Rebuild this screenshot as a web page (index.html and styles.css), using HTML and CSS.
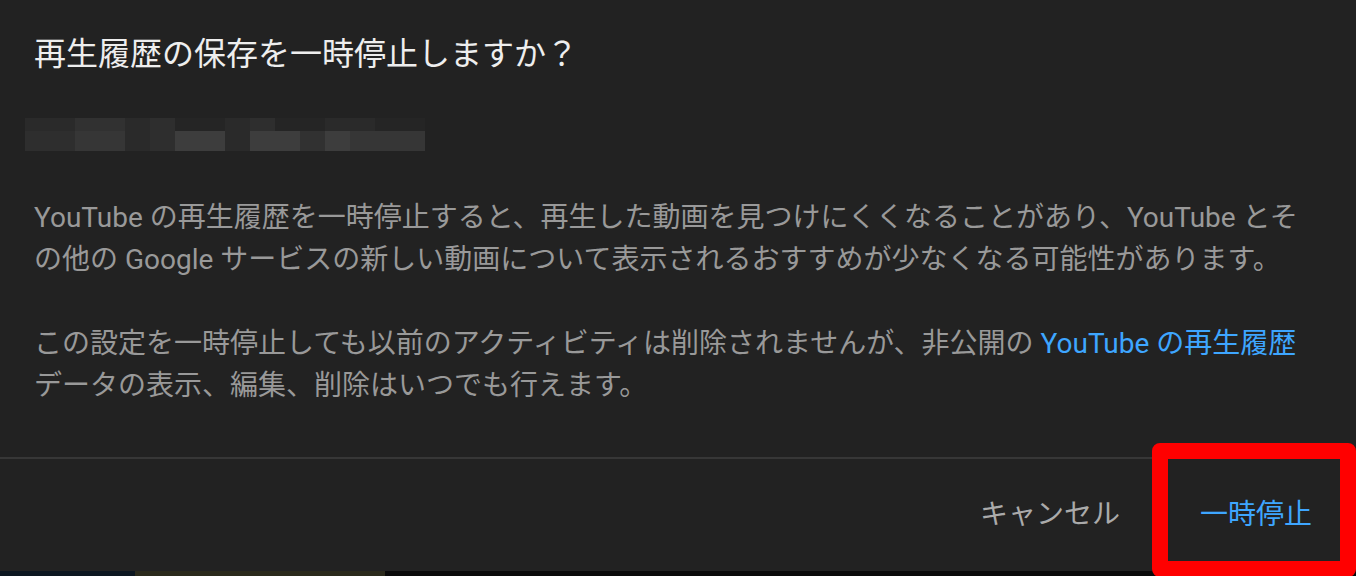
FILE: index.html
```html
<!DOCTYPE html>
<html lang="ja">
  <head>
    <meta charset="UTF-8" />
    <meta name="viewport" content="width=device-width, initial-scale=1.0" />
    <link rel="stylesheet" href="styles.css">
    <title>再生履歴の保存を一時停止</title>
  </head>
  <body>
    <div id="dialog">
      <div class="dialog-body">
        <h2 class="dialog-title">再生履歴の保存を一時停止しますか？</h2>

        <!-- account name, pixelated -->
        <div class="mosaic">
          <div class="px s1"></div><div class="px s1"></div><div class="px s3"></div><div class="px s3"></div>
          <div class="px s1"></div><div class="px s2"></div><div class="px s0"></div><div class="px s0"></div>
          <div class="px s1"></div><div class="px s2"></div><div class="px s0"></div><div class="px s0"></div>
          <div class="px s1"></div><div class="px s1"></div><div class="px s0"></div><div class="px s0"></div>
          <div class="px s2"></div><div class="px s2"></div><div class="px s4"></div><div class="px s4"></div>
          <div class="px s1"></div><div class="px s2"></div><div class="px s5"></div><div class="px s5"></div>
          <div class="px s1"></div><div class="px s5"></div><div class="px s5"></div><div class="px s3"></div>
          <div class="px s5"></div><div class="px s4"></div><div class="px s4"></div><div class="px s4"></div>
        </div>

        <p class="dialog-text">YouTube の再生履歴を一時停止すると、再生した動画を見つけにくくなることがあり、YouTube とその他の Google サービスの新しい動画について表示されるおすすめが少なくなる可能性があります。</p>
        <p class="dialog-text">この設定を一時停止しても以前のアクティビティは削除されませんが、非公開の <a href="#" class="link">YouTube の再生履歴</a>データの表示、編集、削除はいつでも行えます。</p>
      </div>

      <div class="dialog-footer">
        <button class="btn btn-cancel">キャンセル</button>
        <button class="btn btn-confirm">一時停止</button>
      </div>

      <!-- annotation box -->
      <div class="highlight"></div>
    </div>

    <div id="page-strip">
      <div class="strip-a"></div>
      <div class="strip-b"></div>
      <div class="strip-c"></div>
    </div>
  </body>
</html>
```

FILE: styles.css
```css
body {
  margin: 0;
  background-color: #ffffff;
  font-family: Roboto, "Noto Sans CJK JP", sans-serif;
}

#dialog {
  position: relative;
  width: 1356px;
  height: 571px;
  background-color: #222222;
  display: flex;
  flex-direction: column;
}

.dialog-body {
  flex: 1;
  padding: 34px 0 0 34px;
  width: 1280px;
}

.dialog-title {
  margin: 0;
  font-size: 32px;
  line-height: 40px;
  font-weight: normal;
  color: #eeeeee;
}

.mosaic {
  margin: 44px 0 0 -9px;
  display: grid;
  grid-template-columns: repeat(16, 25px);
  grid-template-rows: 13px 20px;
}

.s0 { background-color: #252525; }
.s1 { background-color: #2a2a2a; }
.s2 { background-color: #2e2e2e; }
.s3 { background-color: #313131; }
.s4 { background-color: #363636; }
.s5 { background-color: #3d3d3d; }

.dialog-text {
  margin: 46px 0 0 0;
  font-size: 28px;
  line-height: 42px;
  color: #999999;
}

.dialog-text + .dialog-text {
  margin-top: 42px;
}

.link {
  color: #3ea6ff;
  text-decoration: none;
}

.dialog-footer {
  height: 112px;
  border-top: 2px solid #373737;
  display: flex;
  justify-content: flex-end;
  align-items: center;
  gap: 36px;
  padding-right: 22px;
}

.btn {
  background: none;
  border: none;
  padding: 0 22px;
  font-family: Roboto, "Noto Sans CJK JP", sans-serif;
  font-size: 28px;
  line-height: 40px;
  cursor: pointer;
}

.btn-cancel {
  color: #aaaaaa;
}

.btn-confirm {
  color: #3ea6ff;
}

.highlight {
  position: absolute;
  left: 1152px;
  top: 443px;
  width: 172px;
  height: 102px;
  border: 16px solid #ff0000;
  border-radius: 8px;
}

#page-strip {
  width: 1356px;
  height: 5px;
  display: flex;
  background-color: #0a0a0a;
}

.strip-a {
  width: 135px;
  background-color: #0c1620;
}

.strip-b {
  width: 250px;
  background-color: #2b2a1c;
}

.strip-c {
  flex: 1;
}
```
